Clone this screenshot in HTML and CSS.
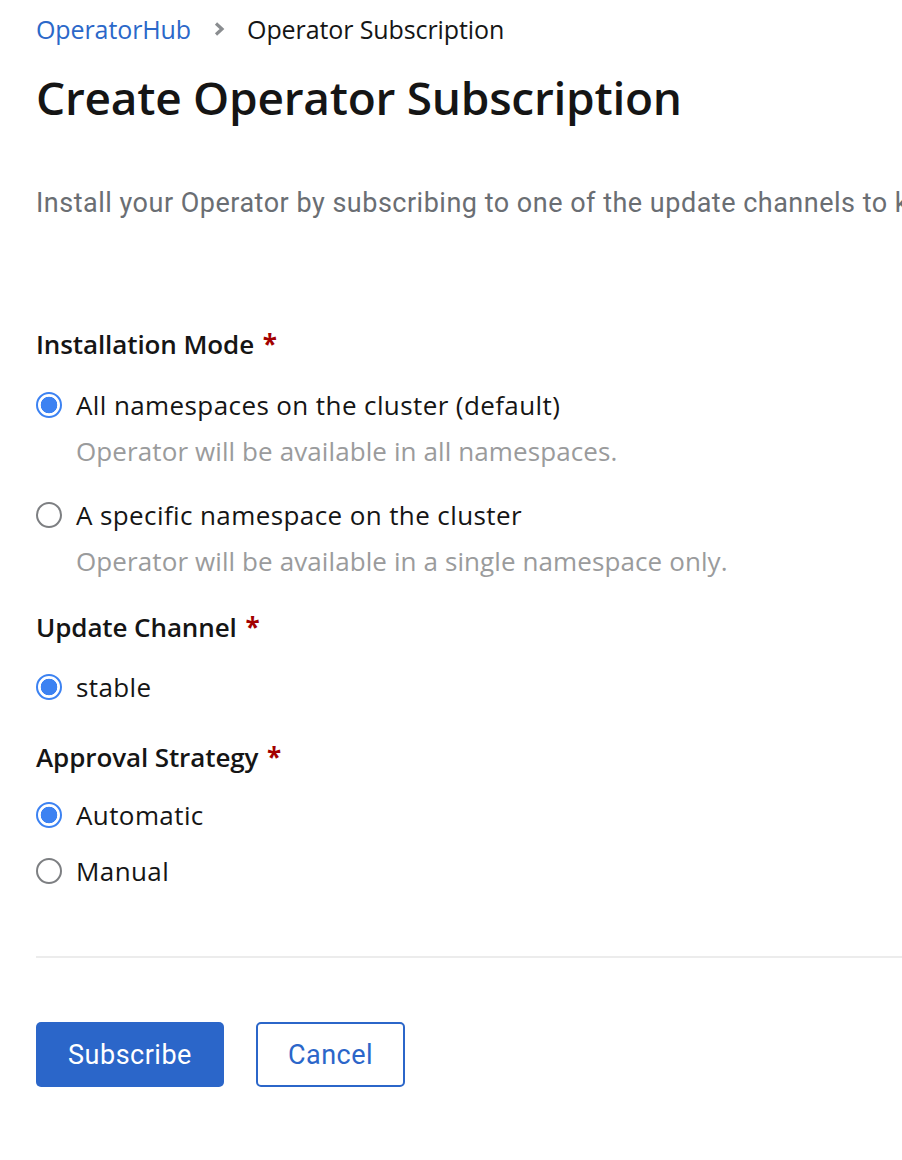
FILE: index.html
```html
<!DOCTYPE html>
<html lang="en">
<head>
<meta charset="utf-8">
<title>Create Operator Subscription</title>
<link rel="stylesheet" href="styles.css">
</head>
<body>
<div class="page">
  <nav class="breadcrumb">
    <a class="crumb-link" href="#">OperatorHub</a>
    <svg class="crumb-sep" width="12" height="16" viewBox="0 0 12 16"><path d="M3 2.5 L9 8 L3 13.5" fill="none" stroke="#8a8d90" stroke-width="3.2" stroke-linejoin="miter"/></svg>
    <span class="crumb-current">Operator Subscription</span>
  </nav>
  <h1 class="title">Create Operator Subscription</h1>
  <div class="intro-wrap">
    <p class="intro">Install your Operator by subscribing to one of the update channels to keep the Operator up to date.</p>
  </div>

  <form class="form">
    <div class="group group-mode">
      <div class="group-label">Installation Mode <span class="req">*</span></div>
      <label class="radio">
        <span class="dot checked"></span>
        <span class="radio-text">All namespaces on the cluster (default)</span>
      </label>
      <div class="helper">Operator will be available in all namespaces.</div>
      <label class="radio radio-second">
        <span class="dot"></span>
        <span class="radio-text">A specific namespace on the cluster</span>
      </label>
      <div class="helper">Operator will be available in a single namespace only.</div>
    </div>

    <div class="group group-channel">
      <div class="group-label">Update Channel <span class="req">*</span></div>
      <label class="radio radio-first">
        <span class="dot checked"></span>
        <span class="radio-text">stable</span>
      </label>
    </div>

    <div class="group group-approval">
      <div class="group-label">Approval Strategy <span class="req">*</span></div>
      <label class="radio radio-first-tight">
        <span class="dot checked"></span>
        <span class="radio-text">Automatic</span>
      </label>
      <label class="radio radio-next">
        <span class="dot"></span>
        <span class="radio-text">Manual</span>
      </label>
    </div>

    <hr class="divider">

    <div class="actions">
      <button type="button" class="btn btn-primary">Subscribe</button>
      <button type="button" class="btn btn-secondary">Cancel</button>
    </div>
  </form>
</div>
</body>
</html>
```

FILE: styles.css
```css
html, body {
  margin: 0;
  padding: 0;
  background: #ffffff;
}

body {
  font-family: "Open Sans", "Noto Sans", sans-serif;
  color: #151515;
  overflow: hidden;
}

.page {
  padding: 12px 0 0 36px;
}

.breadcrumb {
  display: flex;
  align-items: center;
  gap: 22px;
  height: 34px;
  font-size: 25px;
  letter-spacing: -0.1px;
}

.crumb-link {
  color: #2b68c9;
  text-decoration: none;
}

.crumb-sep {
  display: block;
}

.crumb-current {
  color: #151515;
}

.title {
  margin: 23px 0 0 0;
  font-size: 46px;
  line-height: 56px;
  font-weight: 600;
  letter-spacing: -0.25px;
  white-space: nowrap;
}

.intro-wrap {
  overflow: hidden;
  margin-top: 60px;
}

.intro {
  margin: 0;
  font-family: "Roboto", sans-serif;
  font-size: 27px;
  line-height: 36px;
  color: #6a6e73;
  white-space: nowrap;
  letter-spacing: 0.5px;
}

.form {
  margin: 0;
}

.group-label {
  font-size: 26px;
  line-height: 36px;
  font-weight: 600;
  letter-spacing: -0.1px;
}

.req {
  color: #a30000;
  font-weight: 700;
  margin-left: 2px;
}

.group-mode {
  margin-top: 105px;
}

.group-channel {
  margin-top: 30px;
}

.group-approval {
  margin-top: 34px;
}

.radio {
  display: flex;
  align-items: center;
  gap: 14px;
  height: 36px;
  font-size: 26px;
  letter-spacing: 0.4px;
  margin-top: 25px;
}

.radio-second {
  margin-top: 28px;
}

.radio-first {
  margin-top: 24px;
}

.radio-first-tight {
  margin-top: 22px;
}

.radio-next {
  margin-top: 20px;
}

.dot {
  box-sizing: border-box;
  width: 26px;
  height: 26px;
  border-radius: 50%;
  border: 2px solid #7d7f82;
  flex: none;
}

.dot.checked {
  border-color: #3c82f2;
  background: radial-gradient(circle, #3c82f2 0 8px, #ffffff 8.6px);
}

.helper {
  margin-top: 10px;
  padding-left: 40px;
  font-size: 26px;
  line-height: 36px;
  color: #9a9b9c;
  letter-spacing: 0.1px;
  white-space: nowrap;
}

.divider {
  margin: 67px 0 0 0;
  border: 0;
  height: 2px;
  background: #ececec;
}

.actions {
  display: flex;
  gap: 32px;
  margin-top: 64px;
}

.btn {
  box-sizing: border-box;
  height: 65px;
  border-radius: 5px;
  font-family: "Roboto", sans-serif;
  font-size: 27px;
  letter-spacing: 0.5px;
  cursor: pointer;
}

.btn-primary {
  width: 188px;
  background: #2b66c9;
  color: #ffffff;
  border: 0;
}

.btn-secondary {
  width: 149px;
  background: #ffffff;
  color: #2b66c9;
  border: 2px solid #2b66c9;
}
```
